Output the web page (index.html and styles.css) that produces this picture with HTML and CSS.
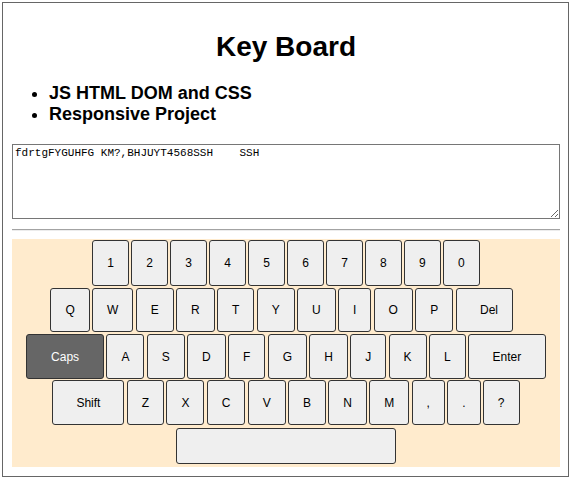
FILE: index.html
```html
<!DOCTYPE html>
<html lang="en">
<head>
<meta charset="utf-8">
<title>Key Board</title>
<link rel="stylesheet" href="styles.css">
</head>
<body>
<div class="page">
  <h1 class="title">Key Board</h1>
  <ul class="features">
    <li>JS HTML DOM and CSS</li>
    <li>Responsive Project</li>
  </ul>
  <textarea class="output">fdrtgFYGUHFG KM?,BHJUYT4568SSH    SSH</textarea>
  <hr class="divider">
  <div class="keyboard">
    <div class="row row-num">
      <button class="key">1</button><button class="key">2</button><button class="key">3</button><button class="key">4</button><button class="key">5</button><button class="key">6</button><button class="key">7</button><button class="key">8</button><button class="key">9</button><button class="key">0</button>
    </div>
    <div class="row row-top">
      <button class="key">Q</button><button class="key">W</button><button class="key">E</button><button class="key">R</button><button class="key">T</button><button class="key">Y</button><button class="key">U</button><button class="key">I</button><button class="key">O</button><button class="key">P</button><button class="key key-del">Del</button>
    </div>
    <div class="row row-home">
      <button class="key key-caps">Caps</button><button class="key">A</button><button class="key">S</button><button class="key">D</button><button class="key">F</button><button class="key">G</button><button class="key">H</button><button class="key">J</button><button class="key">K</button><button class="key">L</button><button class="key key-enter">Enter</button>
    </div>
    <div class="row row-bottom">
      <button class="key key-shift">Shift</button><button class="key">Z</button><button class="key">X</button><button class="key">C</button><button class="key">V</button><button class="key">B</button><button class="key">N</button><button class="key">M</button><button class="key">,</button><button class="key">.</button><button class="key">?</button>
    </div>
    <div class="row row-space">
      <button class="key key-space"></button>
    </div>
  </div>
</div>
</body>
</html>
```
FILE: styles.css
```css
html, body {
  margin: 0;
  padding: 0;
  background: #ffffff;
}

body {
  font-family: "Liberation Sans", Arial, sans-serif;
  color: #000;
}

.page {
  box-sizing: border-box;
  width: 567px;
  height: 475px;
  margin: 2px;
  border: 1px solid #666666;
  padding: 0 8px 9px 9px;
}

.title {
  margin: 28px 0 0;
  font-size: 28px;
  line-height: 32px;
  font-weight: bold;
  text-align: center;
}

.features {
  margin: 20px 0 0;
  padding-left: 37px;
  font-size: 18px;
  line-height: 21px;
  font-weight: bold;
}

.output {
  display: block;
  box-sizing: border-box;
  width: 100%;
  height: 75px;
  margin: 19px 0 0;
  padding: 2px;
  border: 1px solid #767676;
  font-family: "Liberation Mono", "Courier New", monospace;
  font-size: 11px;
  line-height: 13px;
  color: #000;
  background: #fff;
  resize: both;
}

.divider {
  height: 0;
  margin: 10px 0 8px;
  border: 0;
  border-top: 1px solid #a3a3a3;
  border-bottom: 1px solid #ececec;
}

.keyboard {
  background: #ffebcd;
  padding: 1px 0 3px;
}

.row {
  display: flex;
  justify-content: center;
  column-gap: 2.3px;
}

.row-num { height: 46px; margin-bottom: 2px; }
.row-top { height: 44px; margin-bottom: 2px; padding-right: 9px; }
.row-home { height: 45px; margin-bottom: 1px; }
.row-bottom { height: 45px; margin-bottom: 3px; }
.row-space { height: 36px; }

.key {
  box-sizing: border-box;
  height: 100%;
  margin: 0;
  padding: 0 14px;
  border: 1px solid #333333;
  border-radius: 3px;
  background: #efefef;
  color: #000;
  font-family: "Liberation Sans", Arial, sans-serif;
  font-size: 12px;
  line-height: 1;
  flex: none;
}

.key-del {
  width: 57px;
  padding: 0 0 0 10px;
}
.key-caps {
  width: 78px;
  background: #666666;
  color: #ffffff;
}
.key-enter { width: 78px; }
.key-shift { width: 72px; }
.key-space { width: 220px; }
```
